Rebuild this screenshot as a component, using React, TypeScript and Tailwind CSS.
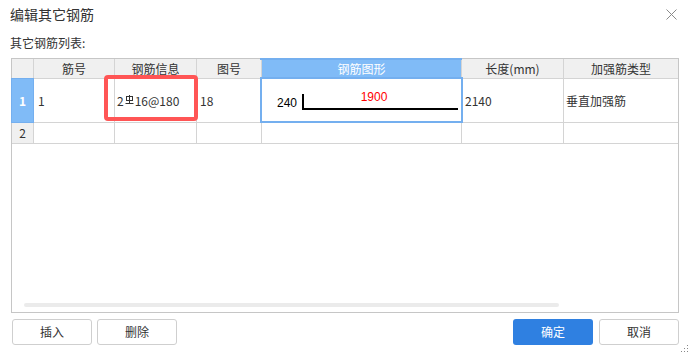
import React from "react";

const cols = [22, 81, 82, 65, 200, 102, 114];

function Grade() {
  return (
    <svg width="9" height="10" viewBox="0 0 9 10" className="inline-block mx-[1px] -translate-y-[1px]">
      <rect x="1.5" y="1.5" width="6" height="4" fill="none" stroke="#333" strokeWidth="1" />
      <line x1="4.5" y1="0" x2="4.5" y2="8" stroke="#333" strokeWidth="1" />
      <line x1="0.5" y1="8.5" x2="8.5" y2="8.5" stroke="#333" strokeWidth="1" />
    </svg>
  );
}

export default function App() {
  const headers = ["", "筋号", "钢筋信息", "图号", "钢筋图形", "长度(mm)", "加强筋类型"];
  return (
    <div className="w-[690px] h-[354px] bg-white relative overflow-hidden text-[#333] font-['Noto_Sans_CJK_SC',sans-serif]">
      {/* title */}
      <div className="h-[28px] flex items-center justify-between pl-[10px] pr-[13px]">
        <span className="text-[14px] leading-none">编辑其它钢筋</span>
        <svg width="11" height="11" viewBox="0 0 11 11">
          <path d="M0.5 0.5 L10.5 10.5 M10.5 0.5 L0.5 10.5" stroke="#8a8a8a" strokeWidth="1" />
        </svg>
      </div>
      <div className="pt-[7px] pl-[10px] h-[16px] box-content text-[12px] leading-[16px]">其它钢筋列表:</div>
      {/* table */}
      <div className="mt-[7px] ml-[11px] w-[668px] h-[255px] border border-[#c6c6c6] flex flex-col relative">
        {/* header */}
        <div className="flex h-[20px] border-b border-[#d4d4d4] bg-[#f0f0f0] text-[12px]">
          {headers.map((h, i) => (
            <div
              key={i}
              style={{ width: cols[i] }}
              className={
                "flex items-center justify-center leading-none " +
                (i < 6 ? "border-r border-[#d4d4d4] " : "") +
                (i === 4 ? "bg-[#80bbf7] text-white relative" : "")
              }
            >
              {i === 4 && <div className="absolute left-[-2px] right-[-1px] top-[-1px] h-[2px] bg-[#74afef]" />}
              {h}
            </div>
          ))}
        </div>
        {/* row 1 */}
        <div className="flex h-[44px] border-b border-[#d4d4d4] text-[12px]">
          <div style={{ width: cols[0] }} className="border-r border-[#d4d4d4] bg-[#80bbf7] text-white font-bold flex items-center justify-center relative">
            <div className="absolute left-[-1px] top-[-1px] right-[-1px] bottom-[-1px] border border-[#74afef]" />
            1
          </div>
          <div style={{ width: cols[1] }} className="border-r border-[#d4d4d4] flex items-center pl-[4px]">1</div>
          <div style={{ width: cols[2] }} className="border-r border-[#d4d4d4] flex items-center pl-[2px] relative">
            <span className="flex items-center">2<Grade />16@180</span>
            <div className="absolute left-[-11px] top-[-4px] w-[94px] h-[46px] border-4 border-[#ff5555] rounded-[4px]" />
          </div>
          <div style={{ width: cols[3] }} className="border-r border-[#d4d4d4] flex items-center pl-[3px]">18</div>
          <div style={{ width: cols[4] }} className="border-r border-[#d4d4d4] relative">
            <svg width="198" height="43" viewBox="0 0 198 43" className="block">
              <text x="15" y="28" fontSize="12" fill="#000" fontFamily="Liberation Sans, Arial, sans-serif">240</text>
              <line x1="41" y1="15" x2="41" y2="31" stroke="#000" strokeWidth="2" />
              <line x1="40" y1="30" x2="196" y2="30" stroke="#000" strokeWidth="2" />
              <text x="112" y="22" fontSize="12" fill="#ff0000" textAnchor="middle" fontFamily="Liberation Sans, Arial, sans-serif">1900</text>
            </svg>
            <div className="absolute left-[-2px] top-[-2px] right-[-2px] bottom-[-1px] border-2 border-[#74afef]" />
          </div>
          <div style={{ width: cols[5] }} className="border-r border-[#d4d4d4] flex items-center pl-[3px]">2140</div>
          <div style={{ width: cols[6] }} className="flex items-center pl-[2px]">垂直加强筋</div>
        </div>
        {/* row 2 */}
        <div className="flex h-[21px] border-b border-[#d4d4d4] text-[12px]">
          <div style={{ width: cols[0] }} className="border-r border-[#d4d4d4] bg-[#f0f0f0] flex items-center justify-center">2</div>
          {cols.slice(1).map((w, i) => (
            <div key={i} style={{ width: w }} className={i < 5 ? "border-r border-[#d4d4d4]" : ""} />
          ))}
        </div>
        <div className="flex-1" />
        {/* horizontal scrollbar */}
        <div className="h-[4px] ml-[12px] w-[535px] rounded-full bg-[#ebebeb] mb-[5px]" />
      </div>
      {/* buttons */}
      <div className="flex justify-between pl-[12px] pr-[11px] mt-[6px] text-[12px]">
        <div className="flex gap-[5px]">
          <button className="w-[80px] h-[26px] border border-[#cfcfcf] rounded-[3px] bg-white flex items-center justify-center">插入</button>
          <button className="w-[80px] h-[26px] border border-[#cfcfcf] rounded-[3px] bg-white flex items-center justify-center">删除</button>
        </div>
        <div className="flex gap-[6px]">
          <button className="w-[80px] h-[26px] rounded-[3px] bg-[#2f80e1] text-white flex items-center justify-center">确定</button>
          <button className="w-[80px] h-[26px] border border-[#cfcfcf] rounded-[3px] bg-white flex items-center justify-center">取消</button>
        </div>
      </div>
      {/* resize grip */}
      <svg width="8" height="8" viewBox="0 0 8 8" className="absolute right-[1px] bottom-[1px]">
        <rect x="6" y="0" width="1" height="1" fill="#888" />
        <rect x="3" y="3" width="1" height="1" fill="#888" />
        <rect x="6" y="3" width="1" height="1" fill="#888" />
        <rect x="0" y="6" width="1" height="1" fill="#888" />
        <rect x="3" y="6" width="1" height="1" fill="#888" />
        <rect x="6" y="6" width="1" height="1" fill="#888" />
      </svg>
    </div>
  );
}
